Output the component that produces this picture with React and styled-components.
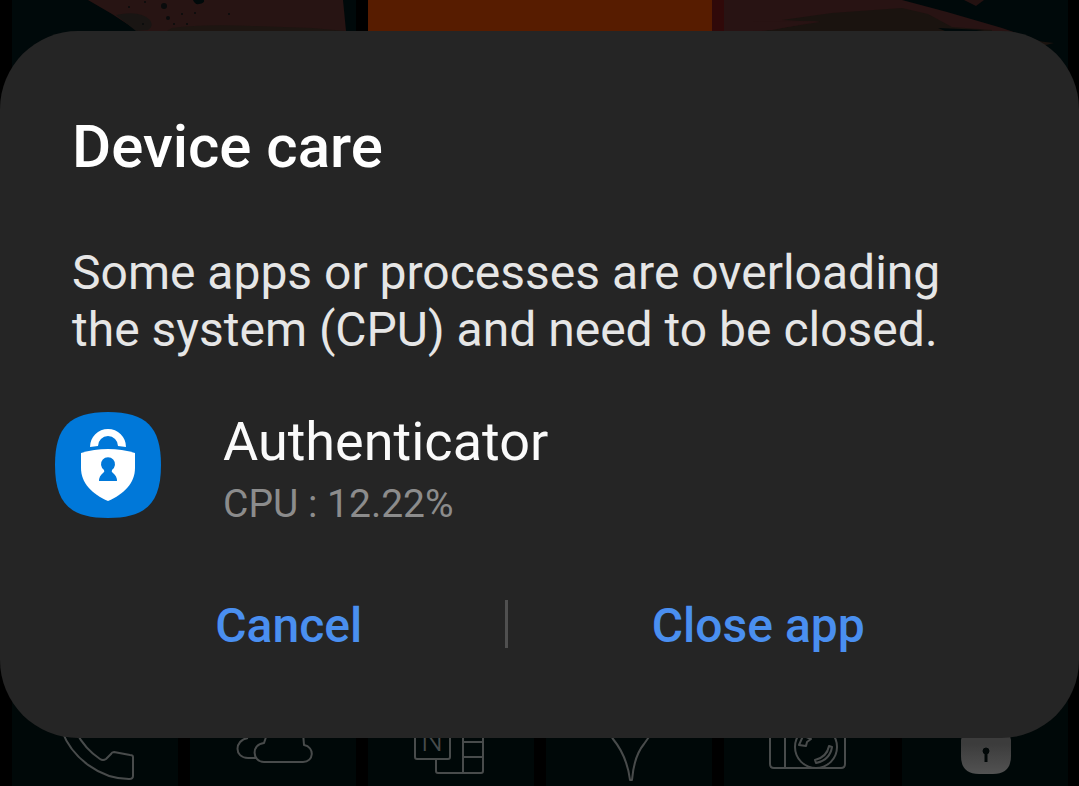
import React from "react";
import styled, { createGlobalStyle } from "styled-components";

const GlobalStyle = createGlobalStyle`
  * {
    box-sizing: border-box;
  }
  body {
    margin: 0;
    background: #000;
    font-family: Roboto, "Liberation Sans", sans-serif;
  }
`;

function LeftArt() {
  return (
    <svg viewBox="0 0 344 120" aria-hidden="true">
      <path d="M76 0 L100 14 L126 31 L150 50 H338 L334 31 L331 0 Z" fill="#271413" />
      <path d="M104 15 Q128 10 138 20 Q142 26 136 30 L124 31 Z" fill="#191513" />
      <path d="M160 28 Q190 24 240 26 L300 28 L334 31 V40 H140 Z" fill="#1d1511" />
      <path d="M181 0 Q183 5 187 4 Q193 3 192 0 Z" fill="#00090a" />
      <g fill="#090b0c">
        <circle cx="152" cy="6" r="3" />
        <circle cx="156" cy="18" r="2" />
        <circle cx="162" cy="24" r="1" />
        <circle cx="175" cy="24" r="1" />
        <circle cx="117" cy="7" r="1" />
        <circle cx="133" cy="2" r="1" />
        <circle cx="170" cy="14" r="1" />
        <circle cx="217" cy="14" r="1" />
        <circle cx="183" cy="13" r="1" />
        <circle cx="131" cy="24" r="1" />
      </g>
    </svg>
  );
}

function RightArt() {
  return (
    <svg viewBox="0 0 356 120" aria-hidden="true">
      <path d="M0 0 H190 L235 12 L290 28 L330 42 L340 60 H0 Z" fill="#281313" />
      <path d="M0 0 H12 V60 H0 Z" fill="#300909" />
      <path d="M70 20 L120 13 L190 8 L216 14 L240 27 L280 30 V50 H50 V31 L108 22 Z" fill="#1a130f" />
      <path d="M40 22 L108 21 L60 30 L40 31 Z" fill="#281313" />
      <path d="M252 0 L264 6 L272 0 Z" fill="#241211" />
      <path d="M226 28 L272 30 L240 34 Z" fill="#00090a" />
      <path d="M316 40 L342 43 L330 46 Z" fill="#1a130f" />
    </svg>
  );
}

function PhoneIcon() {
  return (
    <svg viewBox="0 0 166 80">
      <path d="M50 25C60 52 88 73 117 73Q121 73 121 70V51Q121 49 118 49L102 46Q100 46 99 48L94 53Q91 55 88 53Q73 43 64 26" />
    </svg>
  );
}

function CloudIcon() {
  return (
    <svg viewBox="0 0 166 80">
      <path d="M66 52H58C44 52 44 34 58 32" />
      <path d="M112 26Q114 32 114 39C125 41 124 56 113 56H74C62 56 61 38 74 37Q75 32 79 26" />
    </svg>
  );
}

function NotesIcon() {
  return (
    <svg viewBox="0 0 166 80">
      <path d="M47 20V51Q47 53 49 53H80Q82 53 82 51V20" />
      <path d="M68 53V65Q68 67 70 67H113Q115 67 115 65V20M95 20V67M95 36H115M95 51H115" />
      <Letter x="53" y="45">N</Letter>
    </svg>
  );
}

function PinIcon() {
  return (
    <svg viewBox="0 0 166 80">
      <path d="M62 26L67 33Q81 50 84 74H86Q88 50 98 38L105 28" />
    </svg>
  );
}

function CameraIcon() {
  return (
    <svg viewBox="0 0 166 80">
      <path d="M46 20V58Q46 62 50 62H117Q121 62 121 58V20M61 20V62" />
      <circle cx="92" cy="41" r="21" />
      <path d="M105 40L108 41Q106 54 92 57L91 54Q103 51 105 40ZM79 30L75 39L82 40L83 36L87 33L80 30" />
    </svg>
  );
}

function LockIcon() {
  return (
    <svg viewBox="0 0 166 80">
      <defs>
        <linearGradient id="lock" x1="0" y1="0" x2="0" y2="1">
          <stop offset="0.3" stopColor="#3c3c3c" />
          <stop offset="1" stopColor="#525252" />
        </linearGradient>
      </defs>
      <path
        d="M59 34Q60 27 67 25H101Q108 27 109 34V50Q109 68 91 68H77Q59 68 59 50Z"
        fill="url(#lock)"
        stroke="none"
      />
      <circle cx="84" cy="45" r="3" fill="#020808" stroke="#020808" strokeWidth="1" />
      <path d="M84 45V56" stroke="#020808" strokeWidth="3" />
    </svg>
  );
}

function AuthenticatorIcon() {
  return (
    <AppIcon viewBox="0 0 106 106" aria-hidden="true">
      <path
        d="M53 0C91 0 106 15 106 53S91 106 53 106S0 91 0 53S15 0 53 0Z"
        fill="#0078d9"
      />
      <path
        d="M35 35A18 18 0 0 1 71 35L63 34A10 10 0 0 0 43 34Z"
        fill="#fff"
      />
      <path
        d="M26 41Q39 37 53 37T80 41V56C80 71 69 82 53 89C37 82 26 71 26 56Z"
        fill="#fff"
      />
      <path
        d="M49 58A7 7 0 1 1 57 58Q56 60 58 61Q62 64 62 69H44Q44 64 48 61Q50 60 49 58Z"
        fill="#0078d9"
      />
    </AppIcon>
  );
}

const dock = [PhoneIcon, CloudIcon, NotesIcon, PinIcon, CameraIcon, LockIcon];

function App() {
  return (
    <Screen>
      <GlobalStyle />
      <Home aria-hidden="true">
        <Widgets>
          <Widget $gap>
            <LeftArt />
          </Widget>
          <Widget $color="#571c00" />
          <Widget>
            <RightArt />
          </Widget>
        </Widgets>
        <Dock>
          {dock.map((Icon, i) => (
            <Tile key={i}>
              <Icon />
            </Tile>
          ))}
        </Dock>
      </Home>
      <Dialog role="dialog" aria-labelledby="title" aria-describedby="message">
        <Title id="title">Device care</Title>
        <Message id="message">
          Some apps or processes are overloading the system (CPU) and need to be
          closed.
        </Message>
        <AppRow>
          <AuthenticatorIcon />
          <div>
            <AppName>Authenticator</AppName>
            <Usage>CPU : 12.22%</Usage>
          </div>
        </AppRow>
        <Actions>
          <Action type="button">Cancel</Action>
          <Divider />
          <Action type="button">Close app</Action>
        </Actions>
      </Dialog>
    </Screen>
  );
}

export default App;

const Screen = styled.main`
  position: relative;
  min-height: 100vh;
  padding: 31px 0 48px;
  overflow: hidden;
`;
const Home = styled.div`
  position: absolute;
  inset: 0;
  display: flex;
  flex-direction: column;
  justify-content: space-between;
  padding: 0 11px 0 12px;
`;
const Widgets = styled.div`
  display: grid;
  grid-template-columns: 356fr 344fr 356fr;
  height: 120px;
`;
const Widget = styled.div`
  background: ${(p) => p.$color || "#00090a"};
  margin-right: ${(p) => (p.$gap ? "12px" : "0")};
  overflow: hidden;
  svg {
    display: block;
    width: 100%;
  }
`;
const Dock = styled.div`
  display: grid;
  grid-template-columns: repeat(6, 1fr);
  gap: 12px;
`;
const Tile = styled.div`
  display: flex;
  align-items: flex-end;
  height: 120px;
  background: #000808;
  svg {
    width: 100%;
    fill: none;
    stroke: #484b4b;
    stroke-width: 2;
    stroke-linejoin: round;
  }
`;
const Letter = styled.text`
  font-size: 31px;
  font-weight: 300;
  fill: #484b4b;
  stroke: none;
`;
const Dialog = styled.section`
  position: relative;
  padding: 81px 71px 74px 72px;
  background: #252525;
  border-radius: 78px;
`;
const Title = styled.h1`
  margin: 0;
  font-size: 60px;
  font-weight: 500;
  line-height: 70px;
  color: #fff;
`;
const Message = styled.p`
  margin: 62px 0 0;
  font-size: 48px;
  line-height: 57px;
  color: #e6e6e6;
`;
const AppRow = styled.div`
  display: flex;
  align-items: flex-start;
  gap: 62px;
  margin: 54px 0 0 -17px;
`;
const AppIcon = styled.svg`
  flex: none;
  width: 106px;
  height: 106px;
`;
const AppName = styled.div`
  font-size: 54px;
  line-height: 60px;
  color: #fafafa;
`;
const Usage = styled.div`
  font-size: 39px;
  line-height: 64px;
  color: #8c8c8c;
`;
const Actions = styled.div`
  display: flex;
  align-items: center;
  margin-top: 48px;
`;
const Action = styled.button`
  flex: 1 1 auto;
  padding: 4px 0 0;
  border: 0;
  background: none;
  font-family: inherit;
  font-size: 48px;
  font-weight: 500;
  line-height: 76px;
  color: #4a8ff0;
  cursor: pointer;
`;
const Divider = styled.span`
  width: 3px;
  height: 48px;
  background: #505050;
`;
